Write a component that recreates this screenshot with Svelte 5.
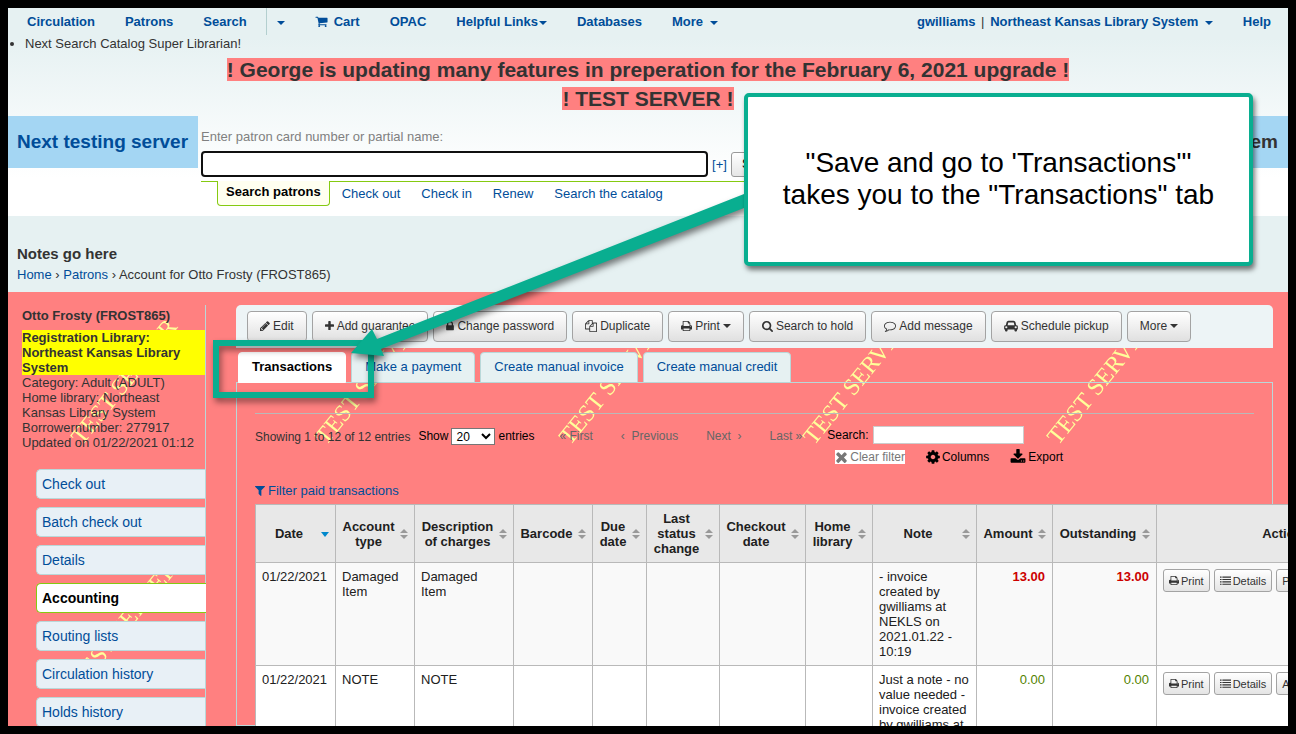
<script>
  const icons = {
    cart: 'M704 1536q0 52-38 90t-90 38-90-38-38-90 38-90 90-38 90 38 38 90zm896 0q0 52-38 90t-90 38-90-38-38-90 38-90 90-38 90 38 38 90zm128-1088v512q0 24-16.5 42.5t-40.5 21.5l-1044 122q13 60 13 70 0 16-24 64h920q26 0 45 19t19 45-19 45-45 19h-1024q-26 0-45-19t-19-45q0-11 8-31.5t16-36 21.5-40 15.5-29.5l-177-823h-204q-26 0-45-19t-19-45 19-45 45-19h256q16 0 28.5 6.5t19.5 15.5 13 24.5 8 26 5.5 29.5 4.5 26h1201q26 0 45 19t19 45z',
    pencil: 'M491 1536l91-91-235-235-91 91v107h128v128h107zm523-928q0-22-22-22-10 0-17 7l-542 542q-7 7-7 17 0 22 22 22 10 0 17-7l542-542q7-7 7-17zm-54-192l416 416-832 832h-416v-416zm683 96q0 53-37 90l-166 166-416-416 166-165q36-38 90-38 53 0 91 38l235 234q37 39 37 91z',
    plus: 'M1600 736v192q0 40-28 68t-68 28h-416v416q0 40-28 68t-68 28h-192q-40 0-68-28t-28-68v-416h-416q-40 0-68-28t-28-68v-192q0-40 28-68t68-28h416v-416q0-40 28-68t68-28h192q40 0 68 28t28 68v416h416q40 0 68 28t28 68z',
    lock: 'M640 768h512v-192q0-106-75-181t-181-75-181 75-75 181v192zm832 96v576q0 40-28 68t-68 28h-960q-40 0-68-28t-28-68v-576q0-40 28-68t68-28h32v-192q0-184 132-316t316-132 316 132 132 316v192h32q40 0 68 28t28 68z',
    copy: 'M1696 384q40 0 68 28t28 68v1216q0 40-28 68t-68 28h-960q-40 0-68-28t-28-68v-288h-544q-40 0-68-28t-28-68v-672q0-40 20-88t48-76l408-408q28-28 76-48t88-20h416q40 0 68 28t28 68v328q68-40 128-40h416zm-544 213l-299 299h299v-299zm-640-384l-299 299h299v-299zm196 647l316-316v-416h-384v416q0 40-28 68t-68 28h-416v640h512v-256q0-40 20-88t48-76zm956 804v-1152h-384v416q0 40-28 68t-68 28h-416v640h896z',
    print: 'M448 1536h896v-256h-896v256zm0-640h896v-384h-160q-40 0-68-28t-28-68v-160h-640v640zm1152 64q0-26-19-45t-45-19-45 19-19 45 19 45 45 19 45-19 19-45zm128 0v416q0 13-9.5 22.5t-22.5 9.5h-224v160q0 40-28 68t-68 28h-960q-40 0-68-28t-28-68v-160h-224q-13 0-22.5-9.5t-9.5-22.5v-416q0-79 56.5-135.5t135.5-56.5h64v-544q0-40 28-68t68-28h672q40 0 88 20t76 48l152 152q28 28 48 76t20 88v256h64q79 0 135.5 56.5t56.5 135.5z',
    search: 'M1216 832q0-185-131.5-316.5t-316.5-131.5-316.5 131.5-131.5 316.5 131.5 316.5 316.5 131.5 316.5-131.5 131.5-316.5zm512 832q0 52-38 90t-90 38q-54 0-90-38l-343-342q-179 124-399 124-143 0-273.5-55.5t-225-150-150-225-55.5-273.5 55.5-273.5 150-225 225-150 273.5-55.5 273.5 55.5 225 150 150 225 55.5 273.5q0 220-124 399l343 343q37 37 37 90z',
    comment: 'M896 384q-204 0-381.5 69.5t-282 187.5-104.5 255q0 112 71.5 213.5t201.5 175.5l87 50-27 96q-24 91-70 172 152-63 275-171l43-38 57 6q69 8 130 8 204 0 381.5-69.5t282-187.5 104.5-255-104.5-255-282-187.5-381.5-69.5zm896 512q0 174-120 321.5t-326 233-450 85.5q-70 0-145-8-198 175-460 242-49 14-114 22h-5q-15 0-27-10.5t-16-27.5v-1q-3-4-.5-12t2-10 4.5-9.5l6-9 7-8.5 8-9q7-8 31-34.5t34.5-38 31-39.5 32.5-51 27-59 26-76q-157-89-247.5-220t-90.5-281q0-174 120-321.5t326-233 450-85.5 450 85.5 326 233 120 321.5z',
    car: 'M480 1088q0-66-47-113t-113-47-113 47-47 113 47 113 113 47 113-47 47-113zm36-320h1016l-89-357q-2-8-14-17.5t-21-9.5h-768q-9 0-21 9.5t-14 17.5zm1372 320q0-66-47-113t-113-47-113 47-47 113 47 113 113 47 113-47 47-113zm160-96v384q0 14-9 23t-23 9h-96v128q0 80-56 136t-136 56-136-56-56-136v-128h-1024v128q0 80-56 136t-136 56-136-56-56-136v-128h-96q-14 0-23-9t-9-23v-384q0-93 65.5-158.5t158.5-65.5h28l105-419q23-94 104-157.5t179-63.5h768q98 0 179 63.5t104 157.5l105 419h28q93 0 158.5 65.5t65.5 158.5z',
    filter: 'M1595 295q17 41-14 70l-493 493v742q0 42-39 59-13 5-25 5-27 0-45-19l-256-256q-19-19-19-45v-486l-493-493q-31-29-14-70 17-39 59-39h1280q42 0 59 39z',
    times: 'M1490 1322q0 40-28 68l-136 136q-28 28-68 28t-68-28l-294-294-294 294q-28 28-68 28t-68-28l-136-136q-28-28-28-68t28-68l294-294-294-294q-28-28-28-68t28-68l136-136q28-28 68-28t68 28l294 294 294-294q28-28 68-28t68 28l136 136q28 28 28 68t-28 68l-294 294 294 294q28 28 28 68z',
    gear: 'M1152 896q0-106-75-181t-181-75-181 75-75 181 75 181 181 75 181-75 75-181zm512-109v222q0 12-8 23t-20 13l-185 28q-19 54-39 91 35 50 107 138 10 12 10 25t-9 23q-27 37-99 108t-94 71q-12 0-26-9l-138-108q-44 23-91 38-16 136-29 186-7 28-36 28h-222q-14 0-24.5-8.5t-11.5-21.5l-28-184q-49-16-90-37l-141 107q-10 9-25 9-14 0-25-11-126-114-165-168-7-10-7-23 0-12 8-23 15-21 51-66.5t54-70.5q-27-50-41-99l-183-27q-13-2-21-12.5t-8-23.5v-222q0-12 8-23t19-13l186-28q14-46 39-92-40-57-107-138-10-12-10-24 0-10 9-23 26-36 98.5-107.5t94.5-71.5q13 0 26 10l138 107q44-23 91-38 16-136 29-186 7-28 36-28h222q14 0 24.5 8.5t11.5 21.5l28 184q49 16 90 37l142-107q9-9 24-9 13 0 25 10 129 119 165 170 7 8 7 22 0 12-8 23-15 21-51 66.5t-54 70.5q26 50 41 98l183 28q13 2 21 12.5t8 23.5z',
    download: 'M1344 1344q0-26-19-45t-45-19-45 19-19 45 19 45 45 19 45-19 19-45zm256 0q0-26-19-45t-45-19-45 19-19 45 19 45 45 19 45-19 19-45zm128-224v320q0 40-28 68t-68 28h-1472q-40 0-68-28t-28-68v-320q0-40 28-68t68-28h465l135 136q58 56 136 56t136-56l136-136h464q40 0 68 28t28 68zm-325-569q17 41-14 70l-448 448q-18 19-45 19t-45-19l-448-448q-31-29-14-70 17-39 59-39h256v-448q0-26 19-45t45-19h256q26 0 45 19t19 45v448h256q42 0 59 39z',
    list: 'M0 256h256v192H0zM384 256h1408v192H384zM0 640h256v192H0zM384 640h1408v192H384zM0 1024h256v192H0zM384 1024h1408v192H384zM0 1408h256v192H0zM384 1408h1408v192H384z'
  };
  // Left edge and width of the glyphs that do not fill the whole 1792 grid.
  const boxes = { pencil: [128, 1536], plus: [192, 1408], lock: [320, 1152], print: [64, 1664], search: [64, 1664], car: [0, 2048], gear: [128, 1536], times: [192, 1408], filter: [192, 1408] };
  const box = (name) => boxes[name] ?? [0, 1792];

  const toolbar = [
    { icon: 'pencil', label: 'Edit' },
    { icon: 'plus', label: 'Add guarantee' },
    { icon: 'lock', label: 'Change password' },
    { icon: 'copy', label: 'Duplicate' },
    { icon: 'print', label: 'Print', menu: true },
    { icon: 'search', label: 'Search to hold' },
    { icon: 'comment', label: 'Add message' },
    { icon: 'car', label: 'Schedule pickup' },
    { label: 'More', menu: true }
  ];
  const tabs = ['Transactions', 'Make a payment', 'Create manual invoice', 'Create manual credit'];
  const side = ['Check out', 'Batch check out', 'Details', 'Accounting', 'Routing lists', 'Circulation history', 'Holds history'];
  const searchTabs = ['Search patrons', 'Check out', 'Check in', 'Renew', 'Search the catalog'];
  const columns = [
    ['Date', 80], ['Account type', 79], ['Description of charges', 99], ['Barcode', 79],
    ['Due date', 54], ['Last status change', 73], ['Checkout date', 86], ['Home library', 67],
    ['Note', 104], ['Amount', 76], ['Outstanding', 104], ['Actions', 260]
  ];
  const rows = [
    { date: '01/22/2021', type: 'Damaged Item', desc: 'Damaged Item', note: '- invoice created by gwilliams at NEKLS on 2021.01.22 - 10:19', amount: '13.00', due: true, action: 'Pay' },
    { date: '01/22/2021', type: 'NOTE', desc: 'NOTE', note: 'Just a note - no value needed - invoice created by gwilliams at NEKLS on 2021.01.22 - 10:20', amount: '0.00', due: false, action: 'Add' }
  ];
</script>

{#snippet icon(name, size = 12)}
  <svg class="icon" width={Math.round((size * box(name)[1]) / 1792)} height={size} viewBox="{box(name)[0]} 0 {box(name)[1]} 1792" aria-hidden="true"><path d={icons[name]} /></svg>
{/snippet}

<div class="frame">
  <header>
    <nav class="topbar">
      <a href="#circ">Circulation</a>
      <a href="#patrons">Patrons</a>
      <a href="#search">Search</a>
      <a href="#searchmenu" class="split" aria-label="Search options"><i class="caret"></i></a>
      <a href="#cart" class="cart">{@render icon('cart', 13)} Cart</a>
      <a href="#opac">OPAC</a>
      <a href="#links">Helpful Links<i class="caret"></i></a>
      <a href="#db">Databases</a>
      <a href="#more">More <i class="caret wide"></i></a>
      <span class="user"><a href="#user">gwilliams</a> <span>|</span> <a href="#library">Northeast Kansas Library System <i class="caret wide"></i></a></span>
      <a href="#help">Help</a>
    </nav>
    <ul class="notice"><li>Next Search Catalog Super Librarian!</li></ul>
    <div class="banner">
      <p><mark>! George is updating many features in preperation for the February 6, 2021 upgrade !</mark></p>
      <p><mark>! TEST SERVER !</mark></p>
    </div>
    <div class="searchrow">
      <h1><a href="#home">Next testing server</a></h1>
      <form class="patronsearch">
        <label for="patron">Enter patron card number or partial name:</label>
        <div class="field">
          <input id="patron" type="text" />
          <a href="#plus">[+]</a>
          <button type="button">Submit</button>
        </div>
        <div class="searchtabs">
          {#each searchTabs as t, i}
            <a href="#st{i}" class:active={i === 0}>{t}</a>
          {/each}
        </div>
      </form>
      <div class="library">Northeast Kansas Library System</div>
    </div>
  </header>

  <div class="crumbs">
    <h2>Notes go here</h2>
    <div><a href="#home">Home</a> › <a href="#patrons">Patrons</a> › Account for Otto Frosty (FROST865)</div>
  </div>

  <div class="body">
    <svg class="watermark" aria-hidden="true">
      <defs>
        <pattern id="mark" width="244" height="242" patternUnits="userSpaceOnUse" x="60" y="-54">
          <text transform="translate(14 208) rotate(-51)">TEST SERVER</text>
        </pattern>
      </defs>
      <rect width="100%" height="100%" fill="url(#mark)" />
    </svg>

    <aside>
      <h3>Otto Frosty (FROST865)</h3>
      <p class="reg">Registration Library: Northeast Kansas Library System</p>
      <ul class="facts">
        <li>Category: Adult (ADULT)</li>
        <li>Home library: Northeast Kansas Library System</li>
        <li>Borrowernumber: 277917</li>
        <li>Updated on 01/22/2021 01:12</li>
      </ul>
      <nav class="sidemenu">
        {#each side as s}
          <a href="#{s}" class:active={s === 'Accounting'}>{s}</a>
        {/each}
      </nav>
    </aside>

    <main>
      <div class="toolbar">
        {#each toolbar as b}
          <button type="button">
            {#if b.icon}{@render icon(b.icon)}{/if}
            <span>{b.label}</span>
            {#if b.menu}<i class="caret"></i>{/if}
          </button>
        {/each}
      </div>
      <nav class="tabs">
        {#each tabs as t, i}
          <a href="#tab{i}" class:active={i === 0}>{t}</a>
        {/each}
      </nav>
      <section class="panel">
        <hr />
        <div class="controls">
          <span class="info">Showing 1 to 12 of 12 entries</span>
          <label class="length">Show <select><option>20</option><option>50</option></select> entries</label>
          <div class="pager">
            <button type="button" disabled>« First</button>
            <button type="button" disabled>‹&nbsp; Previous</button>
            <button type="button" disabled>Next &nbsp;›</button>
            <button type="button" disabled>Last »</button>
          </div>
          <div class="finder">
            <div class="find"><label for="tsearch">Search:</label><input id="tsearch" type="text" /></div>
            <div class="tools">
              <button type="button" class="clear">{@render icon('times', 16)}Clear filter</button>
              <button type="button">{@render icon('gear', 16)}Columns</button>
              <button type="button">{@render icon('download', 16)}Export</button>
            </div>
          </div>
        </div>
        <a class="filter" href="#filter">{@render icon('filter', 13)}Filter paid transactions</a>
        <table>
          <colgroup>
            {#each columns as c}<col style:width="{c[1]}px" />{/each}
          </colgroup>
          <thead>
            <tr>
              {#each columns as c, i}
                <th>
                  {#if i === 11}{c[0]}{:else}
                    <div class="head">
                      <span>{c[0]}</span>
                      <svg width="8" height="10" viewBox="0 0 8 10" aria-hidden="true">
                        {#if i === 0}<path d="M0 3h8L4 8z" fill="#0088cc" />
                        {:else}<path d="M0 4L4 0l4 4z" fill="#999" /><path d="M0 6h8L4 10z" fill="#999" />{/if}
                      </svg>
                    </div>
                  {/if}
                </th>
              {/each}
            </tr>
          </thead>
          <tbody>
            {#each rows as r}
              <tr>
                <td>{r.date}</td><td>{r.type}</td><td>{r.desc}</td>
                <td></td><td></td><td></td><td></td><td></td>
                <td>{r.note}</td>
                <td class="num" class:debit={r.due}>{r.amount}</td>
                <td class="num" class:debit={r.due}>{r.amount}</td>
                <td class="actions">
                  <div>
                    <button type="button">{@render icon('print', 11)}Print</button>
                    <button type="button">{@render icon('list', 11)}Details</button>
                    <button type="button">{r.action}</button>
                  </div>
                </td>
              </tr>
            {/each}
          </tbody>
        </table>
      </section>
    </main>
  </div>

  <div class="outline"></div>
  <svg class="arrow" aria-hidden="true">
    <path d="M343 345L364 321L369 331L736 186V200L373 341L376 348Z" />
  </svg>
  <div class="callout">"Save and go to 'Transactions'"<br />takes you to the "Transactions" tab</div>
</div>

<style>
  :global(body) { margin: 0; background: #000; }
  .frame {
    position: relative; box-sizing: border-box; height: 100vh; overflow: hidden;
    border: 8px solid #000; display: flex; flex-direction: column;
    background: #ff8080; color: #333;
    font: 13px/15px "Liberation Sans", Arial, sans-serif;
  }
  a { color: #004d99; text-decoration: none; }
  h1, h2, h3, p, ul { margin: 0; padding: 0; }
  button, input, select { font-family: inherit; box-sizing: border-box; margin: 0; }
  .icon { fill: currentColor; flex: none; }
  .caret {
    display: inline-block; vertical-align: middle; margin-left: 1px;
    border: 4px solid transparent; border-top-color: currentColor; border-bottom: 0;
  }
  .caret.wide { margin-left: 3px; }

  header {
    flex: none; height: 208px;
    background: linear-gradient(#e6f1f2 0, #e6f1f2 30px, #fff 170px);
  }
  .topbar { display: flex; height: 27px; line-height: 27px; font-weight: bold; padding: 0 17px 0 19px; gap: 30px; }
  .topbar .split { border-left: 1px solid #b3cfcf; padding-left: 10px; margin-left: -11px; }
  .topbar .split .caret { margin: 0; }
  .topbar .cart { display: flex; align-items: center; gap: 6px; }
  .topbar .user { margin-left: auto; }
  .topbar .user span { font-weight: normal; padding: 0 2px; }
  .notice { line-height: 17px; padding-left: 17px; }
  .banner { text-align: center; font: bold 21px/29px "Liberation Sans", Arial, sans-serif; padding: 3px 0 3px; }
  .banner mark { background: #ff8080; color: #333; }
  .searchrow { display: flex; align-items: flex-start; }
  .searchrow h1, .library { background: #a4d6f3; font-size: 19px; line-height: 52px; font-weight: bold; padding: 0 10px 0 9px; white-space: nowrap; }
  .patronsearch { flex: 1; margin-left: 3px; padding-top: 13px; color: #808080; }
  .patronsearch label { display: block; }
  .field { display: flex; align-items: center; gap: 4px; margin-top: 7px; padding-bottom: 4px; }
  .field input { width: 507px; height: 26px; border: 2px solid #101010; border-radius: 4px; flex: none; background: #fff; }
  .field button { height: 25px; padding: 0 10px; font-size: 12px; border: 1px solid #999; border-radius: 3px; background: linear-gradient(#fff, #e6e6e6); }
  .searchtabs { display: flex; gap: 21px; border-top: 1px solid #85ca11; padding-left: 16px; height: 30px; }
  .searchtabs a { padding-top: 4px; }
  .searchtabs .active {
    margin: -1px -9px 0 0; height: 16px; padding: 3px 8px 5px;
    border: 1px solid #85ca11; border-top: 0; border-radius: 0 0 4px 4px;
    background: #fffff0; color: #000; font-weight: bold;
  }

  .crumbs { flex: none; height: 76px; box-sizing: border-box; padding: 29px 9px 0; background: #e6f1f2; }
  .crumbs h2 { font-size: 15px; line-height: 17px; margin-bottom: 5px; }

  .body { position: relative; flex: 1; display: flex; min-height: 0; padding: 13px 15px 0 14px; gap: 30px; }
  .watermark { position: absolute; inset: 0; width: 100%; height: 100%; }
  .watermark text { font: 24px "Liberation Serif", serif; fill: #ffff99; }
  aside { position: relative; width: 184px; box-sizing: border-box; flex: none; border-right: 1px solid #b9d8d9; padding-top: 3px; }
  h3 { font-size: 13px; line-height: 15px; margin-bottom: 7px; }
  .reg { background: #ff0; font-weight: bold; }
  .facts { list-style: none; }
  .sidemenu { display: flex; flex-direction: column; gap: 8px; margin: 19px -1px 0 14px; font-size: 14px; }
  .sidemenu a {
    padding: 6px 5px; line-height: 16px; margin-right: 1px;
    background: #e8f0f6; border: 1px solid #b9d8d9; border-right: 0; border-radius: 5px 0 0 5px;
  }
  .sidemenu .active { margin-right: 0; background: #fff; border-color: #85ca11; color: #000; font-weight: bold; }

  main { position: relative; flex: 1; min-width: 0; display: flex; flex-direction: column; }
  .toolbar { display: flex; gap: 5px; padding: 6px 11px; background: #edf4f6; border-radius: 5px 5px 0 0; }
  .toolbar button {
    display: flex; align-items: center; gap: 3px; height: 31px; padding: 0 12px 2px; white-space: nowrap;
    border: 1px solid #a3a3a3; border-radius: 4px; color: #333; font-size: 12px;
    background: linear-gradient(#fff, #e0e0e0);
  }
  .toolbar .caret { margin-left: 0; }
  .tabs { display: flex; gap: 5px; padding: 4px 2px 0; margin-bottom: -1px; position: relative; }
  .tabs a { line-height: 28px; height: 31px; padding: 0 13px; border: 1px solid #b9d8d9; border-radius: 4px 4px 0 0; background: #e6f1f2; box-sizing: border-box; }
  .tabs .active { background: #fff; border-color: #fff; color: #000; font-weight: bold; }
  .panel { flex: 1; min-height: 0; border: 1px solid #b9d8d9; padding: 0 18px; }
  hr { height: 1px; border: 0; background: #b9b9b9; margin: 30px 0 12px; }
  .controls { display: flex; align-items: flex-start; font-size: 12px; line-height: 18px; white-space: nowrap; }
  .info { padding-top: 2px; margin-right: 8px; }
  .length { color: #000; display: flex; gap: 3px; align-items: center; padding-top: 1px; }
  .length select { width: 44px; height: 17px; font-size: 12px; border: 1px solid #767676; padding: 0; background: #fff; color: #000; }
  .pager { display: flex; gap: 28px; margin: 1px 25px 0 25px; }
  .pager button { border: 0; padding: 0; background: none; color: #666; font-size: 12px; line-height: 18px; }
  .find { display: flex; gap: 4px; color: #000; }
  .find input { width: 151px; height: 18px; border: 1px solid #ccc; background: #fff; }
  .tools { display: flex; gap: 21px; padding: 4px 0 0 8px; align-items: center; }
  .tools button { display: flex; align-items: center; gap: 2px; height: 18px; border: 0; padding: 0; background: none; font-size: 12px; color: #000; }
  .tools .clear { background: #fff; color: #777; height: 14px; }
  .filter { display: flex; align-items: center; gap: 3px; margin: 17px 0 6px; line-height: 15px; }

  table { table-layout: fixed; width: 1161px; border-collapse: collapse; color: #202020; background: #fff; }
  th, td { border: 1px solid #b9b9b9; box-sizing: border-box; }
  th { height: 58px; padding: 0 6px 0 5px; background: #e8e8e8; vertical-align: middle; }
  .head { display: flex; align-items: center; gap: 4px; }
  .head span { flex: 1; }
  .head svg { flex: none; }
  td { height: 103px; padding: 6px 7px 6px 6px; vertical-align: top; }
  tbody tr:nth-child(odd) td { background: #f9f9f9; }
  .num { text-align: right; color: #538200; }
  .debit { color: #c00; font-weight: bold; }
  .actions div { display: flex; gap: 4px; }
  .actions button { display: flex; align-items: center; gap: 2px; height: 23px; padding: 0 5px; border: 1px solid #a3a3a3; border-radius: 3px; background: linear-gradient(#fff, #e4e4e4); color: #333; font-size: 11px; }

  .arrow { position: absolute; inset: 0; width: 100%; height: 100%; fill: #09ae90; filter: drop-shadow(2px 4px 3px rgba(0, 0, 0, .5)); }
  .outline { position: absolute; left: 205px; top: 332px; width: 149px; height: 46px; border: 6px solid #09ae90; filter: drop-shadow(2px 4px 3px rgba(0, 0, 0, .45)); }
  .callout {
    position: absolute; left: 736px; top: 85px; width: 509px; height: 173px; box-sizing: border-box;
    border: 4px solid #09ae90; border-radius: 5px; background: #fff; color: #000;
    display: grid; place-content: center; text-align: center; padding-bottom: 2px;
    font-size: 28px; line-height: 32px; box-shadow: 2px 4px 5px rgba(0, 0, 0, .5);
  }
</style>
